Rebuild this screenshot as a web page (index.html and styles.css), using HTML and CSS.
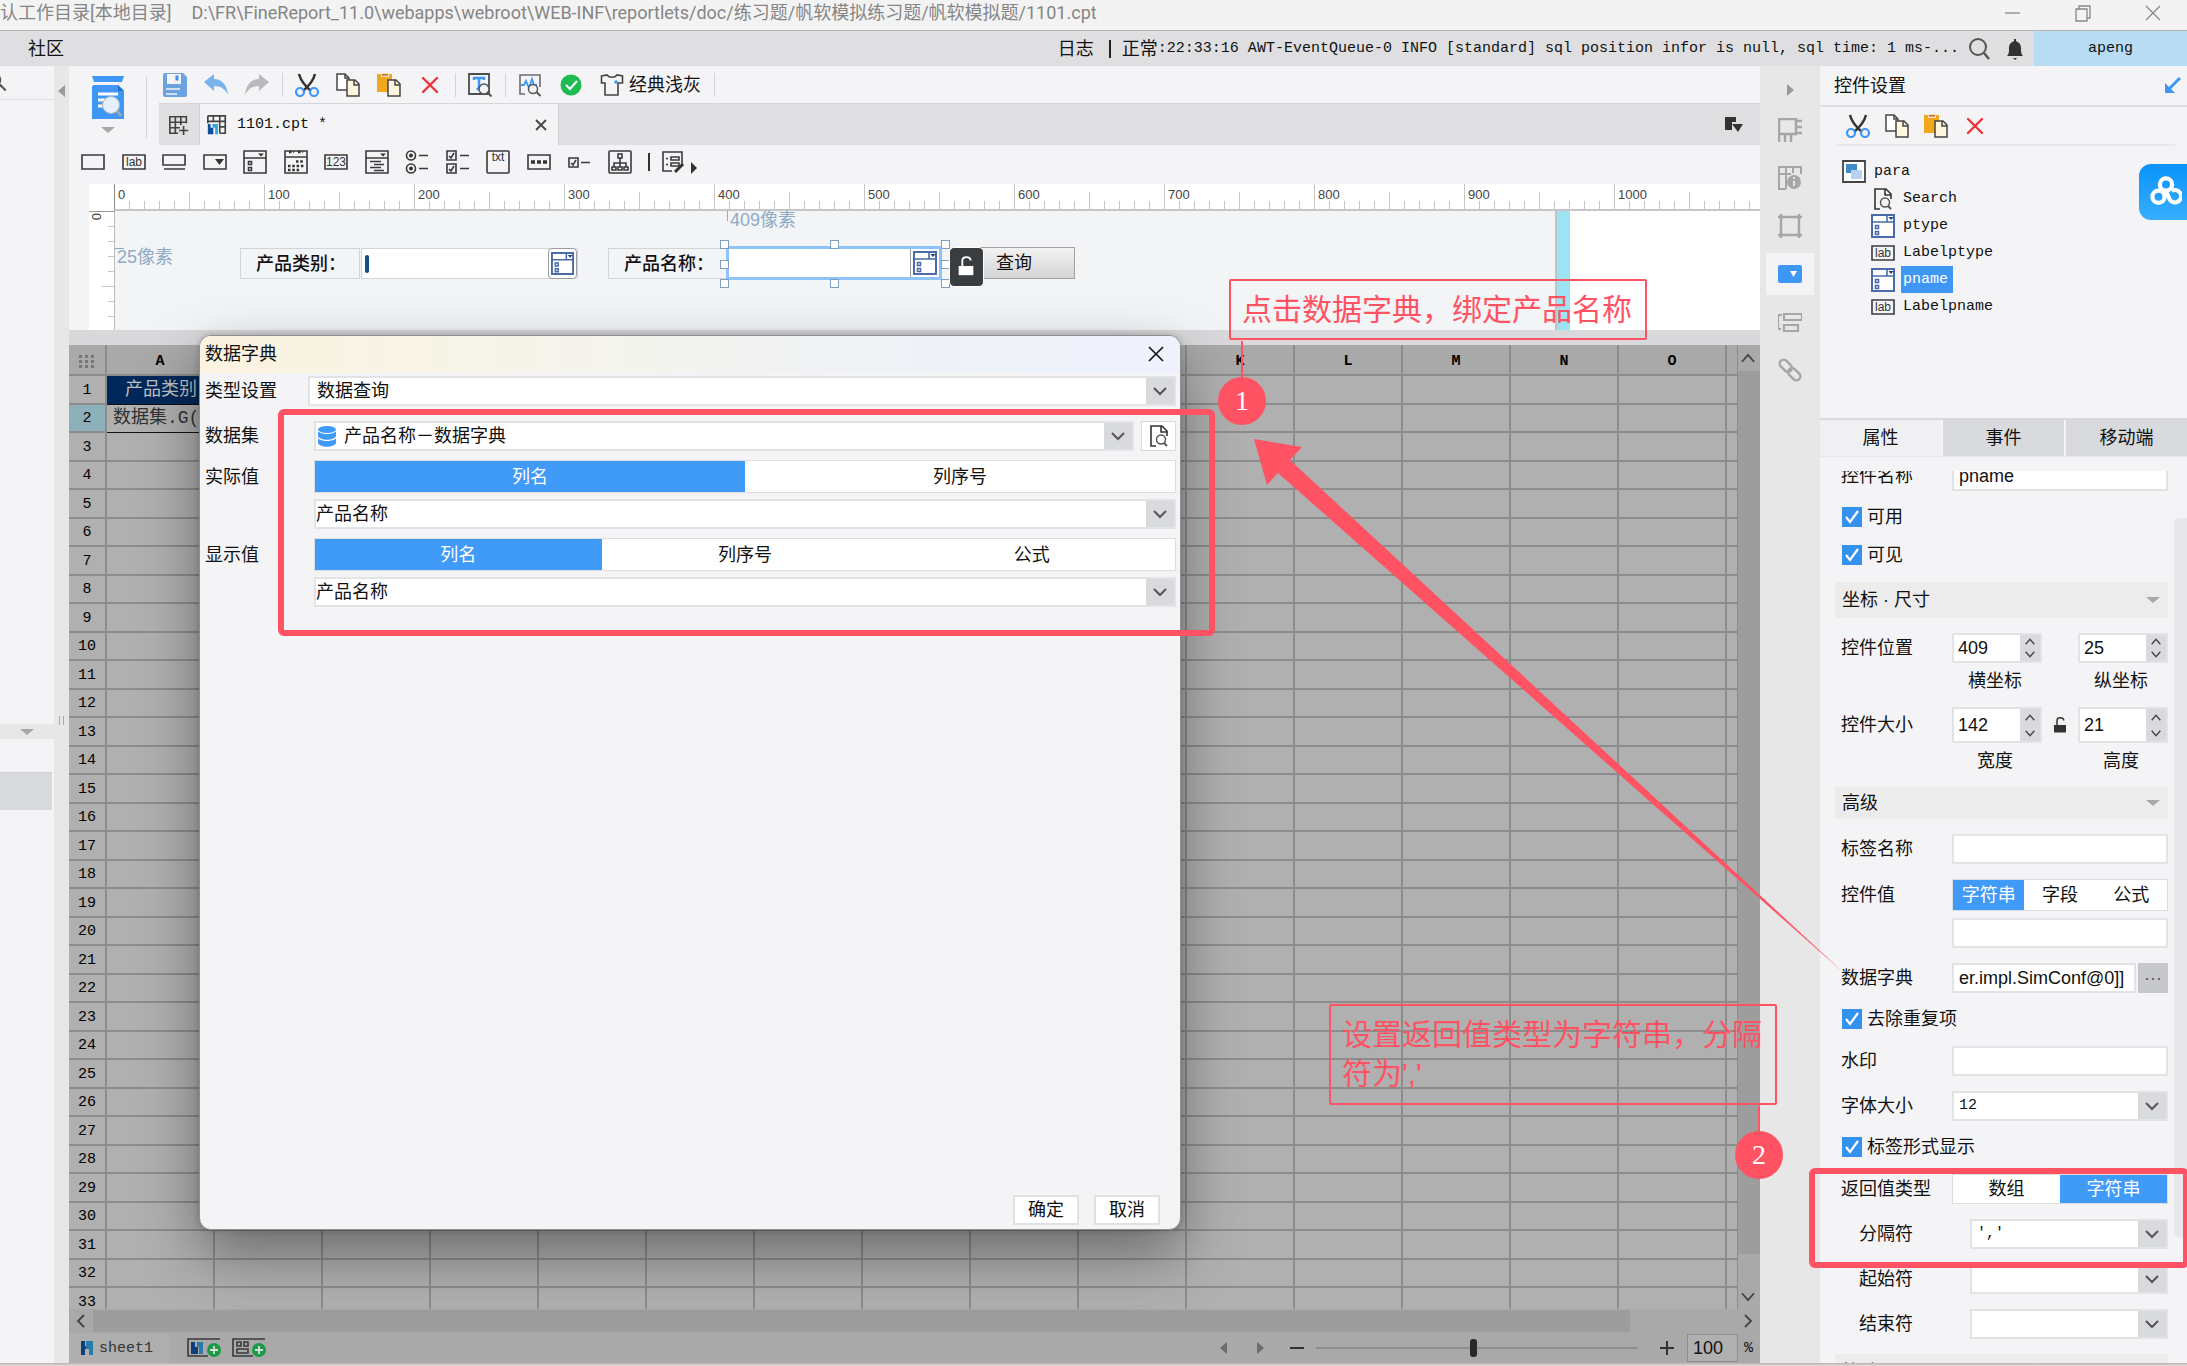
FILE: index.html
```html
<!DOCTYPE html>
<html lang="zh-CN">
<head>
<meta charset="utf-8">
<title>FineReport - 1101.cpt</title>
<link rel="stylesheet" href="styles.css">
</head>
<body>
<svg class="sprite" aria-hidden="true">
  <symbol id="i-save" viewBox="0 0 24 24"><path d="M0 2a2 2 0 0 1 2-2h18l4 4v18a2 2 0 0 1-2 2H2a2 2 0 0 1-2-2z" fill="#6ba2e0"/><path d="M4 1h14v10H4z" fill="#f4f4f6"/><path d="M12.500 2.500h3v5h-3z" fill="#3f8fe8"/><path d="M3 16h14M3 21h11" stroke="#f4f4f6" stroke-width="1.500"/></symbol>
  <symbol id="i-undo" viewBox="0 0 24 24"><path d="M0 9 10 1v5c8 0 13 6 14 16-3-6-7-9-14-9v5z" fill="#7ab2ee"/></symbol>
  <symbol id="i-redo" viewBox="0 0 24 24"><path d="M24 9 14 1v5C6 6 1 12 0 22c3-6 7-9 14-9v5z" fill="#b9babc"/></symbol>
  <symbol id="i-cut" viewBox="0 0 24 24"><path d="M4 1c1 4 5 11 12 17M20 1c-1 4-5 11-12 17" fill="none" stroke="#333" stroke-width="2.500"/><circle cx="5" cy="19" r="4" fill="none" stroke="#3f97f5" stroke-width="2.200"/><circle cx="19" cy="19" r="4" fill="none" stroke="#3f97f5" stroke-width="2.200"/></symbol>
  <symbol id="i-copy" viewBox="0 0 24 24"><path d="M1 1h8l4 4v12H1z" fill="#fff" stroke="#444" stroke-width="1.500"/><path d="M11 7h8l4 4v12H11z" fill="#fff6df" stroke="#444" stroke-width="1.500"/><path d="M18 7v5h5M9 1v4h4" fill="none" stroke="#444" stroke-width="1.500"/></symbol>
  <symbol id="i-paste" viewBox="0 0 24 24"><path d="M0 1h15v18H0z" fill="#f0a91c"/><path d="M4 0h8v4H4z" fill="#f4e3c0"/><path d="M5 1h6v1.500H5z" fill="#d0602a"/><path d="M11 7h8l4 4v12H11z" fill="#fff6df" stroke="#444" stroke-width="1.500"/><path d="M18 7v5h5" fill="none" stroke="#444" stroke-width="1.500"/></symbol>
  <symbol id="i-del" viewBox="0 0 24 24"><path d="m5 5 14 14M19 5 5 19" stroke="#ee3338" stroke-width="2.400" stroke-linecap="round"/></symbol>
  <symbol id="i-find" viewBox="0 0 24 24"><path d="M1 1h20v20H1z" fill="none" stroke="#4a4c50" stroke-width="1.800"/><path d="M6 7V5h10v2M11 5v11M8.500 16h5" fill="none" stroke="#3f97f5" stroke-width="2.500"/><circle cx="16" cy="16" r="5" fill="#f4f4f6" stroke="#555" stroke-width="1.500"/><path d="m19.500 19.500 4 4" stroke="#555" stroke-width="2"/></symbol>
  <symbol id="i-chart" viewBox="0 0 24 24"><path d="M7 21H2V2h20v12" fill="none" stroke="#6a6c70" stroke-width="1.600"/><path d="M3 12h3l2-4 3 7 3-9 2 6h3" fill="none" stroke="#3f97f5" stroke-width="1.800"/><circle cx="15" cy="16" r="4.500" fill="#f4f4f6" stroke="#555" stroke-width="1.500"/><path d="m18.500 19 4 4" stroke="#555" stroke-width="2"/></symbol>
  <symbol id="i-ok" viewBox="0 0 24 24"><circle cx="12" cy="12" r="10.500" fill="#1dbb50"/><path d="m7 12 4 4 7-8" fill="none" stroke="#fff" stroke-width="2.200"/></symbol>
  <symbol id="i-shirt" viewBox="0 0 24 24"><path d="M1.500 3 7 2c2 3 8 3 10 0l5.500 1v7H18v12H5V10H1.500z" fill="none" stroke="#444" stroke-width="1.600"/><circle cx="16" cy="9" r="1.800" fill="#3f97f5"/></symbol>
  <symbol id="i-newtab" viewBox="0 0 24 24"><path d="M20 10V3H2v18h9M2 9h18M2 15h11M8 3v18M14 3v9" fill="none" stroke="#444" stroke-width="1.800"/><path d="M17 13v10M12 18h10" stroke="#444" stroke-width="1.800"/></symbol>
  <symbol id="i-cpt" viewBox="0 0 24 24"><path d="M2 2h19v19h-6M2 2v8M2 8h19M15 14h6M8 2v6M15 2v19" fill="none" stroke="#444" stroke-width="1.800"/><path d="M2 11h3v4h3v7H2z" fill="#0d4f9c"/><path d="M7 11h6v11h-3v-7H7z" fill="#35a7e0"/></symbol>
  <symbol id="i-box" viewBox="0 0 24 24"><path d="M1 5h22v14H1z" class="ln"/></symbol>
  <symbol id="i-lab" viewBox="0 0 24 24"><path d="M1 5h22v14H1z" class="ln"/><text x="12" y="16" class="it">lab</text></symbol>
  <symbol id="i-btn" viewBox="0 0 24 24"><path d="M1 5h22v10H1zM2 19h21" class="ln"/></symbol>
  <symbol id="i-drop" viewBox="0 0 24 24"><path d="M1 5h22v14H1z" class="ln"/><path d="M12 9h9l-4.500 6z" fill="#333"/></symbol>
  <symbol id="i-combo" viewBox="0 0 24 24"><path d="M1 1h22v22H1zM1 8h22M5.500 11.500h3v3h-3zM5.500 17.500h3v3h-3z" class="ln"/><path d="M15 3.500h6l-3 3z" fill="#333"/></symbol>
  <symbol id="i-cal" viewBox="0 0 24 24"><path d="M1 1h22v22H1zM1 7h22" class="ln"/><path d="M5 2h5M14 2h5M12 11.500h8M4 16h16M4 20h12" stroke="#333" stroke-width="2.500" stroke-dasharray="2.500 1.800"/></symbol>
  <symbol id="i-num" viewBox="0 0 24 24"><path d="M1 5h22v14H1z" class="ln"/><text x="12" y="16" class="it">123</text></symbol>
  <symbol id="i-area" viewBox="0 0 24 24"><path d="M1 1h22v22H1zM1 8h22M5 11.500h11M9 14.500h10M5 17.500h11M9 20.500h10" class="ln"/><path d="M15 3.500h6l-3 3z" fill="#333"/></symbol>
  <symbol id="i-radio" viewBox="0 0 24 24"><g class="ln"><circle cx="6" cy="5.500" r="4.500"/><circle cx="6" cy="18.500" r="4.500"/><path d="M14 5.500h9M14 18.500h9"/></g><circle cx="6" cy="5.500" r="2" fill="#333"/><circle cx="6" cy="18.500" r="2" fill="#333"/></symbol>
  <symbol id="i-checks" viewBox="0 0 24 24"><path d="M1 1h9v9H1zM1 14h9v9H1zM14 5.500h9M14 18.500h9M3 6l2 2 3-5M3 19l2 2 3-5" class="ln"/></symbol>
  <symbol id="i-txt" viewBox="0 0 24 24"><rect x="1" y="1" width="22" height="22" rx="1" class="ln"/><text x="12" y="11" class="it">txt</text></symbol>
  <symbol id="i-pwd" viewBox="0 0 24 24"><path d="M1 5h22v14H1z" class="ln"/><path d="M4 12h4M10 12h4M16 12h4" stroke="#333" stroke-width="3.500"/></symbol>
  <symbol id="i-chk" viewBox="0 0 24 24"><path d="M2 8h9v9H2zM14 12.500h9M4 13l2 2 3-5" class="ln"/></symbol>
  <symbol id="i-tree" viewBox="0 0 24 24"><rect x="1" y="1" width="22" height="22" rx="1" class="ln"/><path d="M10 4h4v4h-4zM4 17h4v3H4zM10 17h4v3h-4zM16 17h4v3h-4zM12 8v9M6 17v-4h12v4" class="ln"/></symbol>
  <symbol id="i-form" viewBox="0 0 24 24"><path d="M11 21H2V2h19v12M10 7h8v3h-8zM10 13h8v3h-8zM5 8.500h2M5 14.500h2" class="ln"/><path d="m14 22 8-8" stroke="#333" stroke-width="3"/></symbol>
  <symbol id="i-combo-blue" viewBox="0 0 24 24"><path d="M1 1h22v22H1z" fill="#fff" stroke="#4b6ba8" stroke-width="2"/><path d="M1 8h22M16 1v7M4.500 11.500h3v3h-3zM4.500 17.500h3v3h-3z" fill="none" stroke="#4b6ba8" stroke-width="1.600"/><path d="M17.500 3h5L20 6z" fill="#233c7a"/></symbol>
  <symbol id="i-search-page" viewBox="0 0 24 24"><path d="M9 22H4V2h11l5 5v5M14 2v6h6" fill="none" stroke="#333" stroke-width="1.600"/><circle cx="14" cy="15.500" r="4.500" fill="none" stroke="#555" stroke-width="1.500"/><path d="m17 19 3 3" stroke="#555" stroke-width="2"/></symbol>
  <symbol id="i-mag" viewBox="0 0 24 24"><circle cx="11" cy="10" r="8" fill="none" stroke="#555" stroke-width="2"/><path d="m17 16 5 6" stroke="#555" stroke-width="2.500"/></symbol>
  <symbol id="i-unlock" viewBox="0 0 24 24"><path d="M4 12h16v10H4z" fill="currentColor"/><path d="M8 12V6c0-5 9-5 9 0" fill="none" stroke="currentColor" stroke-width="2"/></symbol>
  <symbol id="i-up" viewBox="0 0 24 24"><path d="m4 17 8-9 8 9" fill="none" stroke="#444" stroke-width="2.500"/></symbol>
  <symbol id="i-down" viewBox="0 0 24 24"><path d="m4 7 8 9 8-9" fill="none" stroke="#444" stroke-width="2.500"/></symbol>
  <symbol id="i-left" viewBox="0 0 24 24"><path d="m16 4-8 8 8 8" fill="none" stroke="#444" stroke-width="2.500"/></symbol>
  <symbol id="i-right" viewBox="0 0 24 24"><path d="m8 4 8 8-8 8" fill="none" stroke="#444" stroke-width="2.500"/></symbol>
</svg>

<div class="app">
  <header class="titlebar">
    <div class="titlebar__text"><span>认工作目录[本地目录]</span><span>D:\FR\FineReport_11.0\webapps\webroot\WEB-INF\reportlets/doc/练习题/帆软模拟练习题/帆软模拟题/1101.cpt</span></div>
    <div class="titlebar__buttons">
      <button aria-label="最小化"><svg viewBox="0 0 20 20"><path d="M2 10h15" stroke="#888" stroke-width="1.300"/></svg></button>
      <button aria-label="还原"><svg viewBox="0 0 20 20"><path d="M3 6h11v12H3zM6 6V3h11v12h-3" fill="none" stroke="#888" stroke-width="1.300"/></svg></button>
      <button aria-label="关闭"><svg viewBox="0 0 20 20"><path d="m3 3 14 14M17 3 3 17" stroke="#888" stroke-width="1.300"/></svg></button>
    </div>
  </header>

  <nav class="menubar">
    <a class="menubar__item" href="#">社区</a>
    <div class="log">日志 <i class="log__bar"></i> 正常<code>:22:33:16 AWT-EventQueue-0 INFO [standard] sql position infor is null, sql time: 1 ms-...</code></div>
    <svg class="icon"><use href="#i-mag"/></svg>
    <svg class="icon" viewBox="0 0 24 24"><path d="M4 19c2-2 2-4 2-8 0-9 12-9 12 0 0 4 0 6 2 8zM10 21h4l-2 2zM11 2h2v3h-2z" fill="#333"/></svg>
    <button class="user">apeng</button>
  </nav>

  <div class="workspace">
    <aside class="left">
      <div class="left__search"><svg viewBox="0 0 24 24"><circle cx="6" cy="8" r="8" fill="none" stroke="#555" stroke-width="2"/><path d="m13 14 8 8" stroke="#555" stroke-width="3"/></svg></div>
      <div class="left__pane"></div>
      <div class="left__bar"><i class="tri tri--down"></i></div>
      <div class="left__pane"><div class="left__sel"></div></div>
    </aside>
    <div class="gutter"><i class="tri tri--left"></i><i class="grip"></i><i></i></div>

    <main class="editor">
      <div class="tools">
        <div class="preview">
          <svg viewBox="0 0 32 43"><path d="M0 0h32l-2 6H2zM0 11a2 2 0 0 1 2-2h24l6 6v28H0z" fill="#3f97f5"/><path d="m26 9 6 6h-6z" fill="#1b6fd0"/><path d="M6 18h20M6 24h9M6 30h7" stroke="#fff" stroke-width="3"/><circle cx="19" cy="29" r="8.500" fill="#e6f0fa" stroke="#a9b8c8"/><path d="m25 35 4 5" stroke="#9aa7b5" stroke-width="3"/></svg>
          <i class="tri tri--down"></i>
        </div>
        <div class="tools__main">
          <div class="toolbar">
            <svg class="icon"><use href="#i-save"/></svg><svg class="icon"><use href="#i-undo"/></svg><svg class="icon"><use href="#i-redo"/></svg>
            <i class="sep"></i>
            <svg class="icon"><use href="#i-cut"/></svg><svg class="icon"><use href="#i-copy"/></svg><svg class="icon"><use href="#i-paste"/></svg><svg class="icon"><use href="#i-del"/></svg>
            <i class="sep"></i>
            <svg class="icon"><use href="#i-find"/></svg>
            <i class="sep"></i>
            <svg class="icon"><use href="#i-chart"/></svg><svg class="icon"><use href="#i-ok"/></svg>
            <button class="theme"><svg class="icon"><use href="#i-shirt"/></svg>经典浅灰</button>
            <i class="sep"></i>
          </div>
          <div class="tabs">
            <button class="tabs__new" aria-label="新建"><svg class="icon"><use href="#i-newtab"/></svg></button>
            <div class="tabs__tab"><svg class="icon"><use href="#i-cpt"/></svg><span>1101.cpt *</span><button aria-label="关闭"><svg viewBox="0 0 14 14"><path d="m2 2 10 10M12 2 2 12" stroke="#444" stroke-width="1.800"/></svg></button></div>
            <svg class="tabs__menu" viewBox="0 0 20 18"><path d="M1 1h11v5H8v8H1z" fill="#333"/><path d="M8 8h11l-5 8z" fill="#333"/></svg>
          </div>
        </div>
      </div>
      <div class="widgets">
        <svg class="icon"><use href="#i-box"/></svg><svg class="icon"><use href="#i-lab"/></svg><svg class="icon"><use href="#i-btn"/></svg><svg class="icon"><use href="#i-drop"/></svg><svg class="icon"><use href="#i-combo"/></svg><svg class="icon"><use href="#i-cal"/></svg><svg class="icon"><use href="#i-num"/></svg><svg class="icon"><use href="#i-area"/></svg><svg class="icon"><use href="#i-radio"/></svg><svg class="icon"><use href="#i-checks"/></svg><svg class="icon"><use href="#i-txt"/></svg><svg class="icon"><use href="#i-pwd"/></svg><svg class="icon"><use href="#i-chk"/></svg><svg class="icon"><use href="#i-tree"/></svg>
        <i class="widgets__bar"></i><svg class="icon"><use href="#i-form"/></svg><i class="widgets__more"></i>
      </div>

      <div class="designer">
        <div class="ruler"><span>0</span><span>100</span><span>200</span><span>300</span><span>400</span><span>500</span><span>600</span><span>700</span><span>800</span><span>900</span><span>1000</span></div>
        <div class="designer__body">
          <div class="vruler"><span>0</span></div>
          <div class="canvas">
            <span class="dim dim--y">25像素</span>
            <span class="dim dim--x">409像素</span>
            <div class="wlabel wlabel--type">产品类别：</div>
            <div class="wcombo wcombo--type"><i class="caret"></i><svg class="icon"><use href="#i-combo-blue"/></svg></div>
            <div class="wlabel wlabel--name">产品名称：</div>
            <div class="wcombo wcombo--name"><svg class="icon"><use href="#i-combo-blue"/></svg></div>
            <i class="handle h-l h-t"></i><i class="handle h-c h-t"></i><i class="handle h-r h-t"></i>
            <i class="handle h-l h-m"></i><i class="handle h-r h-m"></i>
            <i class="handle h-l h-b"></i><i class="handle h-c h-b"></i><i class="handle h-r h-b"></i>
            <button class="wquery">查询</button>
            <div class="wlock"><svg class="icon"><use href="#i-unlock"/></svg></div>
          </div>
          <div class="canvas-edge"></div>
        </div>
      </div>

      <div class="splitter"></div>

      <section class="sheet">
        <div class="sheet__view">
          <div class="sheet__clip">
            <table class="grid">
              <colgroup><col class="grid__rowcol"><col span="15" class="grid__col"><col class="grid__last"></colgroup>
              <thead><tr><th><i class="dots"></i></th><th>A</th><th>B</th><th>C</th><th>D</th><th>E</th><th>F</th><th>G</th><th>H</th><th>I</th><th>J</th><th>K</th><th>L</th><th>M</th><th>N</th><th>O</th><th></th></tr></thead>
              <tbody id="rows"></tbody>
            </table>
          </div>
          <div class="vscroll"><svg class="arrow"><use href="#i-up"/></svg><i class="vscroll__thumb"></i><svg class="arrow"><use href="#i-down"/></svg></div>
        </div>
        <div class="hscroll"><svg class="arrow"><use href="#i-left"/></svg><i class="hscroll__thumb"></i><svg class="arrow"><use href="#i-right"/></svg></div>
        <footer class="sheetbar">
          <button class="sheetbar__tab"><svg viewBox="0 0 12 14"><path d="M0 0h4v5h4v3H4v6H0z" fill="#0d3f7c"/><path d="M5 0h7v14H8V8H5z" fill="#2a7ba8"/></svg>sheet1</button>
          <svg class="sheetbar__add" viewBox="0 0 34 20"><path d="M33 1H1v17h20" class="ln"/><path d="M4 4h4v5h3v7H4z" fill="#0d3f7c"/><path d="M10 4h6v12h-4V9h-2z" fill="#2a7ba8"/><circle cx="27" cy="12" r="7" fill="#1d9a48"/><path d="M27 8v8M23 12h8" stroke="#ddd" stroke-width="1.800"/></svg>
          <svg class="sheetbar__add" viewBox="0 0 34 20"><path d="M33 1H1v17h20M5 4h4v4H5zM12 4h4v4h-4zM5 11h11v4H5z" class="ln"/><circle cx="27" cy="12" r="7" fill="#1d9a48"/><path d="M27 8v8M23 12h8" stroke="#ddd" stroke-width="1.800"/></svg>
          <div class="zoom"><i class="tri tri--left"></i><i class="tri tri--right"></i><span class="minus"></span><input type="range" min="0" max="100" value="49" aria-label="缩放"><span class="plus"></span><input class="zoom__value" type="text" value="100" aria-label="缩放比例"><span class="zoom__pct">%</span></div>
        </footer>
      </section>
    </main>

    <nav class="rail">
      <span><i class="tri tri--right"></i></span>
      <span><svg class="icon" viewBox="0 0 24 24"><path d="M1 1h17v15H1zM1 16v8M7 16v8M13 16v8M18 3h6M18 9h6M18 15h6" fill="none" stroke="#a5a6a8" stroke-width="2.500"/></svg></span>
      <span><svg class="icon" viewBox="0 0 24 24"><path d="M23 8V1H1v22h7M1 8h12M8 1v22M15 1v6" fill="none" stroke="#a5a6a8" stroke-width="2"/><circle cx="16" cy="16" r="7" fill="#a5a6a8"/><path d="M16 11v2M16 15v5" stroke="#e7e7e8" stroke-width="2"/></svg></span>
      <span><svg class="icon" viewBox="0 0 24 24"><path d="M0 3h24M0 21h24M3 0v24M21 0v24" fill="none" stroke="#a5a6a8" stroke-width="2.500"/></svg></span>
      <span class="rail__on"><svg class="icon" viewBox="0 0 24 24"><rect y="3" width="24" height="18" rx="2" fill="#3f97f5"/><path d="M12 9h7l-3.500 6z" fill="#fff"/></svg></span>
      <span><svg class="icon" viewBox="0 0 24 24"><path d="M4 5H0v14h3M6 4h18v6H6zM6 15h14v6H6z" fill="none" stroke="#a5a6a8" stroke-width="2.200"/></svg></span>
      <span><svg class="icon" viewBox="0 0 24 24"><g transform="rotate(45 12 12)" fill="none" stroke="#a5a6a8" stroke-width="2.500"><rect x="-1" y="8" width="14" height="8" rx="4"/><rect x="11" y="8" width="14" height="8" rx="4"/></g></svg></span>
    </nav>

    <aside class="props">
      <div class="props__title">控件设置<svg viewBox="0 0 18 18"><path d="M17 1 6 12" stroke="#3f97f5" stroke-width="3"/><path d="M2 6v10h10z" fill="#3f97f5"/></svg></div>
      <div class="props__tools"><svg class="icon"><use href="#i-cut"/></svg><svg class="icon"><use href="#i-copy"/></svg><svg class="icon"><use href="#i-paste"/></svg><svg class="icon"><use href="#i-del"/></svg></div>
      <ul class="tree">
        <li class="tree__root"><svg class="icon" viewBox="0 0 24 24"><path d="M1 1h22v21H1z" fill="#fff" stroke="#444" stroke-width="1.800"/><path d="M4 4h11v9H4z" fill="#3d8dc8"/><path d="M9 10h11v9H9z" fill="#b9d0f2"/></svg><span>para</span></li>
        <li><svg class="icon"><use href="#i-search-page"/></svg><span>Search</span></li>
        <li><svg class="icon"><use href="#i-combo-blue"/></svg><span>ptype</span></li>
        <li><svg class="icon"><use href="#i-lab"/></svg><span>Labelptype</span></li>
        <li><svg class="icon"><use href="#i-combo-blue"/></svg><span class="tree__on">pname</span></li>
        <li><svg class="icon"><use href="#i-lab"/></svg><span>Labelpname</span></li>
      </ul>
      <div class="ptabs"><button class="ptabs__on">属性</button><button>事件</button><button>移动端</button></div>
      <form class="form">
        <div class="row row--first"><label for="f-name">控件名称</label><input id="f-name" type="text" value="pname"></div>
        <label class="check"><input type="checkbox" checked>可用</label>
        <label class="check"><input type="checkbox" checked>可见</label>
        <h3 class="section">坐标 · 尺寸<i class="tri tri--down"></i></h3>
        <div class="row"><span class="row__label">控件位置</span>
          <div class="spin"><input type="text" value="409" aria-label="横坐标"><span class="spin__btns"><svg><use href="#i-up"/></svg><svg><use href="#i-down"/></svg></span></div>
          <span class="row__mid"></span>
          <div class="spin"><input type="text" value="25" aria-label="纵坐标"><span class="spin__btns"><svg><use href="#i-up"/></svg><svg><use href="#i-down"/></svg></span></div>
        </div>
        <div class="captions"><span>横坐标</span><span>纵坐标</span></div>
        <div class="row row--size"><span class="row__label">控件大小</span>
          <div class="spin"><input type="text" value="142" aria-label="宽度"><span class="spin__btns"><svg><use href="#i-up"/></svg><svg><use href="#i-down"/></svg></span></div>
          <span class="row__mid"><svg><use href="#i-unlock"/></svg></span>
          <div class="spin"><input type="text" value="21" aria-label="高度"><span class="spin__btns"><svg><use href="#i-up"/></svg><svg><use href="#i-down"/></svg></span></div>
        </div>
        <div class="captions"><span>宽度</span><span>高度</span></div>
        <h3 class="section section--short">高级<i class="tri tri--down"></i></h3>
        <div class="row"><label for="f-label">标签名称</label><input id="f-label" type="text"></div>
        <div class="row row--seg"><span class="row__label">控件值</span><div class="seg"><button type="button" class="seg__on">字符串</button><button type="button">字段</button><button type="button">公式</button></div></div>
        <div class="row row--tight"><span class="row__label"></span><input type="text" aria-label="控件值"></div>
        <div class="row"><label for="f-dict">数据字典</label><input id="f-dict" class="dict" type="text" value="er.impl.SimConf@0]]"><button type="button" class="more">···</button></div>
        <label class="check"><input type="checkbox" checked>去除重复项</label>
        <div class="row"><label for="f-wm">水印</label><input id="f-wm" type="text"></div>
        <div class="row"><label for="f-size">字体大小</label><select id="f-size" class="mono"><option>12</option></select></div>
        <label class="check"><input type="checkbox" checked>标签形式显示</label>
        <div class="row"><span class="row__label">返回值类型</span><div class="seg"><button type="button">数组</button><button type="button" class="seg__on">字符串</button></div></div>
        <div class="row row--sub"><label for="f-sep">分隔符</label><select id="f-sep" class="mono"><option>','</option></select></div>
        <div class="row row--sub"><label for="f-start">起始符</label><select id="f-start"><option></option></select></div>
        <div class="row row--sub"><label for="f-end">结束符</label><select id="f-end"><option></option></select></div>
        <h3 class="section">校验</h3>
      </form>
    </aside>
  </div>
  <div class="taskline"></div>

  <i class="props-scroll"></i>
  <button class="cloud" aria-label="云盘"><svg viewBox="0 0 34 36"><g fill="none" stroke="#fff" stroke-width="4.500"><circle cx="17" cy="10" r="6.500"/><circle cx="9" cy="23" r="6.500"/><path d="M17 17l4 9a6.500 6.500 0 1 0 2-9"/></g></svg></button>

  <div class="dialog" role="dialog" aria-label="数据字典">
    <div class="dialog__title">数据字典<button aria-label="关闭"><svg viewBox="0 0 16 16"><path d="m1 1 14 14M15 1 1 15" stroke="#111" stroke-width="1.600"/></svg></button></div>
    <div class="dialog__body">
      <div class="drow drow--type"><label for="d-type">类型设置</label><select id="d-type"><option>数据查询</option></select></div>
      <div class="drow"><label for="d-set">数据集</label><select id="d-set" class="with-db"><option>产品名称－数据字典</option></select><button class="dview" aria-label="预览"><svg class="icon"><use href="#i-search-page"/></svg></button></div>
      <div class="drow drow--seg"><span class="drow__label">实际值</span><div class="seg"><button class="seg__on">列名</button><button>列序号</button></div></div>
      <div class="drow drow--tight"><span class="drow__label"></span><select class="flush" aria-label="实际值"><option>产品名称</option></select></div>
      <div class="drow drow--seg"><span class="drow__label">显示值</span><div class="seg"><button class="seg__on">列名</button><button>列序号</button><button>公式</button></div></div>
      <div class="drow drow--tight"><span class="drow__label"></span><select class="flush" aria-label="显示值"><option>产品名称</option></select></div>
    </div>
    <div class="dialog__foot"><button>确定</button><button>取消</button></div>
  </div>

  <div class="mark mark--dialog"></div>
  <div class="mark mark--return"></div>
  <svg class="pointer" viewBox="0 0 600 546"><path d="M6 6 54 14 42 27 596 540 30 40 19 52z" fill="#ff5364"/></svg>
  <div class="note note--one">点击数据字典，绑定产品名称</div>
  <div class="note note--two">设置返回值类型为字符串，分隔符为','</div>
  <div class="badge badge--one">1</div>
  <div class="badge badge--two">2</div>
</div>
<script src="grid.js"></script>
</body>
</html>
```
FILE: grid.js
```js
// Fills the worksheet with its 33 rows of 15 columns.
const body = document.getElementById('rows');
for (let r = 1; r <= 33; r++) {
  const tr = body.insertRow();
  const head = document.createElement('th');
  head.scope = 'row';
  head.textContent = r;
  tr.appendChild(head);
  for (let c = 0; c < 16; c++) tr.insertCell();
}
body.rows[0].cells[1].textContent = '产品类别';
body.rows[0].cells[1].className = 'cell-head';
body.rows[1].cells[0].className = 'row-on';
body.rows[1].cells[1].textContent = '数据集.G(类别)';
body.rows[1].cells[1].className = 'cell-data';
```
FILE: styles.css
```css
* { box-sizing: border-box; }
body {
  margin: 0;
  color: #111;
  font: 18px/24px "Liberation Sans", "Noto Sans CJK SC", sans-serif;
}
button, input, select {
  margin: 0;
  padding: 0;
  border: 0;
  border-radius: 0;
  background: none;
  color: inherit;
  font: inherit;
}
svg { display: block; flex: none; }
i { display: block; flex: none; }
.sprite { display: none; }
.icon { width: 24px; height: 24px; }
.ln { fill: none; stroke: #3a3a3c; stroke-width: 1.6; }
.it { font: 12px "Liberation Sans", sans-serif; fill: #333; text-anchor: middle; }

.app {
  position: relative;
  display: flex;
  flex-direction: column;
  height: 100vh;
  overflow: hidden;
  background: #f4f4f6;
}
.tri { width: 0; height: 0; border: 5px solid transparent; }
.tri--down { border-top: 6px solid #a8a8aa; border-bottom: 0; border-left-width: 7px; border-right-width: 7px; }
.tri--left { border-right: 7px solid #9a9a9c; border-left: 0; border-top-width: 6px; border-bottom-width: 6px; }
.tri--right { border-left: 7px solid #9a9a9c; border-right: 0; border-top-width: 6px; border-bottom-width: 6px; }

/* window title */
.titlebar {
  display: flex;
  justify-content: space-between;
  align-items: center;
  height: 31px;
  padding-bottom: 4px;
  background: #f3f3f3;
  border-bottom: 1px solid #b4b4b4;
  color: #858585;
  font-family: Roboto, "Noto Sans CJK SC", sans-serif;
}
.titlebar__text { display: flex; gap: 20px; white-space: nowrap; }
.titlebar__buttons { display: flex; gap: 50px; padding-right: 24px; }
.titlebar__buttons svg { width: 20px; height: 20px; }

/* menu bar */
.menubar {
  display: flex;
  align-items: center;
  height: 35px;
  gap: 12px;
  background: #dfdfe1;
}
.menubar__item { padding-left: 28px; margin-right: auto; color: inherit; text-decoration: none; }
.log { display: flex; align-items: center; margin-right: -4px; white-space: pre; }
.log__bar { width: 2px; height: 18px; margin: 0 6px 0 10px; background: #222; }
.log code, .mono { font: 15px/24px "Liberation Mono", "Noto Sans CJK SC", monospace; }
.user {
  width: 153px;
  height: 35px;
  margin-left: -5px;
  background: #b8dcf3;
  font: 15px "Liberation Mono", monospace;
}

.workspace { display: flex; flex: 1; min-height: 0; }
.taskline { height: 3px; background: linear-gradient(#bdb0ab, #e8dcd8); }

/* left dock */
.left { display: flex; flex-direction: column; width: 54px; }
.left__search { height: 34px; padding-top: 8px; border-bottom: 1px solid #dcdcde; }
.left__search svg { width: 18px; height: 18px; margin-left: -10px; }
.left__pane { flex: 1; overflow: hidden; }
.left__bar { display: flex; align-items: center; justify-content: center; height: 15px; background: #e7e7e8; }
.left__sel { height: 38px; margin: 33px 2px 0 0; background: #d8dade; border-top: 1px solid #cfd0d3; }
.gutter {
  display: flex;
  flex-direction: column;
  justify-content: space-between;
  align-items: center;
  width: 15px;
  padding: 19px 0;
  background: #e7e7e8;
}
.grip { width: 5px; height: 9px; border: solid #a8a8aa; border-width: 0 1px; }

/* editor column */
.editor { display: flex; flex-direction: column; flex: 1; min-width: 0; }
.tools { display: flex; height: 79px; }
.preview {
  display: flex;
  flex-direction: column;
  align-items: center;
  gap: 8px;
  width: 78px;
  height: 62px;
  margin-top: 10px;
  border-right: 1px solid #d4d4d6;
}
.preview svg { width: 32px; height: 43px; }
.tools__main { display: flex; flex-direction: column; flex: 1; padding-left: 12px; }
.toolbar { display: flex; align-items: center; gap: 17px; height: 37px; padding-left: 4px; }
.sep { width: 1px; height: 24px; margin: 0 -5px 0 -4px; background: #d4d4d6; }
.theme { display: flex; align-items: center; gap: 5px; }
.tabs { display: flex; align-items: center; height: 42px; background: #dfdfe1; border-top: 1px solid #d6d6d8; }
.tabs__new { display: flex; align-items: center; justify-content: center; width: 40px; height: 41px; }
.tabs__new .icon, .tabs__tab .icon { width: 22px; height: 22px; }
.tabs__tab {
  display: flex;
  align-items: center;
  width: 360px;
  height: 41px;
  padding: 0 10px 0 6px;
  gap: 9px;
  background: #f4f4f6;
  border: solid #cfcfd1;
  border-width: 0 1px;
  font: 15px/24px "Liberation Mono", monospace;
}
.tabs__tab button { margin-left: auto; }
.tabs__tab button svg { width: 14px; height: 14px; }
.tabs__menu { width: 20px; height: 18px; margin: 0 16px 0 auto; }
.widgets { display: flex; align-items: center; gap: 17px; height: 39px; padding: 0 0 5px 12px; }
.widgets .icon { margin-right: -1px; }
.widgets .icon:nth-child(odd) { margin-right: 0; }
.widgets__bar { width: 2px; height: 18px; margin-right: -6px; background: #333; }
.widgets__more { border: 6px solid transparent; border-left: 6px solid #333; border-right: 0; margin: 12px 0 0 -10px; }

/* parameter pane designer */
.designer { height: 146px; background: linear-gradient(90deg, #f4f4f6 20px, #fff 20px); }
.ruler {
  display: flex;
  height: 27px;
  margin-left: 45px;
  overflow: hidden;
  border-left: 1px solid #888;
  border-bottom: 2px solid #c6c6c8;
  background:
    repeating-linear-gradient(90deg, transparent 0 149px, #c6c6c8 149px 150px) 0 0 / 100% 100% no-repeat,
    repeating-linear-gradient(90deg, transparent 0 74px, #c6c6c8 74px 75px) 0 100% / 100% 17px no-repeat,
    repeating-linear-gradient(90deg, transparent 0 14px, #c6c6c8 14px 15px) 0 100% / 100% 8px no-repeat,
    #fff;
}
.ruler span { flex: 0 0 150px; padding-left: 3px; font-size: 13px; line-height: 21px; color: #444; }
.designer__body { display: flex; height: 119px; margin-left: 20px; }
.vruler {
  width: 26px;
  border-top: 1px solid #999;
  border-right: 1px solid #bbb;
  background:
    repeating-linear-gradient(#0000 0 74px, #c6c6c8 74px 75px) 100% 0 / 12px 100% no-repeat,
    repeating-linear-gradient(#0000 0 14px, #c6c6c8 14px 15px) 100% 0 / 6px 100% no-repeat,
    #fff;
}
.vruler span { display: block; width: 12px; margin-top: 1px; font-size: 13px; line-height: 10px; text-align: center; color: #444; writing-mode: vertical-rl; }
.canvas { position: relative; flex: 0 0 1440px; background: #f3f4f6; }
.canvas-edge { width: 15px; background: #9ce3f3; border-left: 2px solid #c0c4c6; }
.dim { position: absolute; color: #8faac6; line-height: 20px; }
.dim--y { left: 0; top: 36px; padding: 0 2px; }
.dim--y::before { content: ""; position: absolute; left: 0; top: 1px; width: 9px; height: 1px; background: #8faac6; }
.dim--x { left: 612px; top: -1px; padding-left: 3px; }
.dim--x::before { content: ""; position: absolute; left: 0; top: 1px; width: 1px; height: 10px; background: #8faac6; }
.wlabel { position: absolute; top: 37px; width: 120px; height: 31px; padding-left: 15px; border: 1px solid #d3d4d6; line-height: 30px; white-space: nowrap; overflow: hidden; font-weight: 500; }
.wlabel--type { left: 125px; }
.wlabel--name { left: 493px; }
.wcombo { position: absolute; display: flex; align-items: center; height: 31px; background: #fff; border: 1px solid #d3d4d6; }
.wcombo .icon { width: 29px; height: 31px; margin-left: auto; padding: 3px 2px; border: 1px solid #9a9ca0; border-radius: 4px; background: #fff; }
.wcombo--type { left: 246px; top: 37px; width: 217px; }
.caret { width: 4px; height: 18px; margin-left: 3px; border-radius: 2px; background: #0d4f90; }
.wcombo--name { left: 611px; top: 35px; width: 216px; height: 34px; border: 3px solid #8fc3fb; }
.wcombo--name .icon { height: 28px; padding: 2px; border-radius: 0; border-width: 0 0 0 1px; }
.handle { position: absolute; width: 9px; height: 9px; border: 1px solid #7f9fbf; background: #fff; }
.h-l { left: 605px; } .h-c { left: 715px; } .h-r { left: 826px; }
.h-t { top: 29px; } .h-m { top: 49px; } .h-b { top: 68px; }
.wquery { position: absolute; left: 860px; top: 36px; width: 100px; height: 32px; padding-left: 20px; text-align: left; line-height: 28px; border: 1px solid #a2a2a4; background: linear-gradient(#f3f3f3, #d4d4d6); }
.wlock { position: absolute; left: 834px; top: 36px; width: 35px; height: 40px; padding: 7px 5px; border: 1px solid #fff; border-radius: 5px; background: #3a3d40; color: #fff; }
.wlock .icon { width: 22px; height: 22px; }
.splitter { height: 15px; background: #d9d9db; }

/* worksheet */
.sheet { display: flex; flex-direction: column; flex: 1; min-height: 0; background: #a9a9a9; }
.sheet__view { display: flex; flex: 1; min-height: 0; }
.sheet__clip { flex: 1; min-width: 0; overflow: hidden; background: #b0b0b0; }
.grid { width: 1669px; table-layout: fixed; border-collapse: collapse; font: 15px/24px "Liberation Mono", "Noto Sans CJK SC", monospace; color: #000; }
.grid__rowcol { width: 37px; }
.grid__col { width: 108px; }
.grid__last { width: 12px; }
.grid tr { height: 29px; }
.grid thead tr { height: 30px; }
.grid tbody tr:nth-child(even) { height: 28px; }
.grid th, .grid td { padding: 0; border: 2px solid #8c8c8c; border-top-width: 0; font-weight: 400; overflow: hidden; white-space: nowrap; }
.grid th:first-child { border-left: 0; }
.grid tbody th { padding-top: 2px; }
.grid thead th { padding-top: 4px; font-weight: 700; background: #a9a9a9; }
.grid td:nth-child(10) { border-right: 2px dashed #222; }
.grid .cell-head { padding-left: 18px; background: #00285a; color: #c0c0c0; font-size: 18px; line-height: 20px; border: 1px solid #111; }
.grid .cell-data { padding-left: 6px; color: #333; font-size: 18px; line-height: 20px; border: 1px solid #111; }
.grid .row-on { background: #8eb0bb; }
.dots { width: 16px; height: 14px; margin: 0 auto; background: repeating-linear-gradient(90deg, #0000 0 3px, #a9a9a9 3px 6px), repeating-linear-gradient(#777 0 3px, #a9a9a9 3px 5px); }
.arrow { width: 18px; height: 18px; }
.vscroll { display: flex; flex-direction: column; width: 22px; padding: 4px 0 3px; }
.vscroll .arrow { margin: 0 1px; }
.vscroll__thumb { flex: 1; margin: 4px 0 34px; background: #9d9d9d; }
.hscroll { display: flex; height: 24px; padding: 1px 0; }
.hscroll .arrow { margin: 2px 3px; }
.hscroll__thumb { flex: 1; margin-right: 106px; background: #9d9d9d; }
.sheetbar { display: flex; align-items: center; height: 30px; }
.sheetbar__tab { display: flex; align-items: center; gap: 6px; width: 101px; height: 30px; margin-right: 17px; padding-left: 12px; background: #aeaeae; color: #333; font: 15px "Liberation Mono", monospace; }
.sheetbar__tab svg { width: 12px; height: 14px; }
.sheetbar__add { width: 34px; height: 20px; margin-right: 11px; }
.zoom { display: flex; align-items: center; margin-left: auto; }
.zoom .tri { margin-right: 30px; }
.zoom .tri--left { border-right-color: #6c6c6c; }
.zoom .tri--right { margin-right: 26px; border-left-color: #6c6c6c; }
.minus { width: 14px; height: 2px; margin-right: 12px; background: #333; }
.zoom input[type="range"] { width: 322px; height: 20px; appearance: none; background: linear-gradient(#8e8e8e, #8e8e8e) 0 9px / 100% 2px no-repeat; }
.zoom input[type="range"]::-webkit-slider-thumb { appearance: none; width: 7px; height: 18px; border-radius: 3px; background: #2a2a2a; }
.plus { width: 14px; height: 14px; margin: 0 13px 0 22px; background: linear-gradient(#333, #333) 6px 0 / 2px 14px no-repeat, linear-gradient(#333, #333) 0 6px / 14px 2px no-repeat; }
.zoom__value { width: 51px; height: 28px; padding-left: 5px; border: 1px solid #8e8e8e; background: #b0b0b0; }
.zoom__pct { width: 22px; padding-left: 6px; font: 15px "Liberation Mono", monospace; }

/* icon rail */
.rail { display: flex; flex-direction: column; align-items: center; width: 60px; padding: 11px 0; background: #e7e7e8; gap: 6px; }
.rail span { display: flex; align-items: center; justify-content: center; width: 48px; height: 42px; }
.rail span:first-child { height: 26px; }
.rail__on { background: #f4f4f6; }

/* widget settings */
.props { display: flex; flex-direction: column; width: 367px; }
.props__title { display: flex; align-items: center; justify-content: space-between; height: 41px; padding: 0 6px 0 14px; border-bottom: 2px solid #dedee0; }
.props__title svg { width: 18px; height: 18px; }
.props__tools { display: flex; align-items: center; gap: 15px; height: 39px; margin: 0 12px 0 16px; padding-left: 10px; border-bottom: 2px solid #e8e8ea; }
.tree { height: 272px; margin: 0; padding: 12px 0 0 51px; list-style: none; font: 15px/27px "Liberation Mono", monospace; }
.tree li { display: flex; align-items: center; height: 27px; gap: 6px; }
.tree li span { padding: 0 2px; }
.tree__root { margin-left: -29px; }
.tree .tree__on { padding-right: 5px; background: #3f97f5; color: #fff; }
.ptabs { display: flex; gap: 2px; height: 39px; border-top: 2px solid #d8dade; border-bottom: 1px solid #e8e8ea; }
.ptabs button { flex: 1; background: #d8dade; }
.ptabs .ptabs__on { background: #f0f0f2; }
.form { display: flex; flex-direction: column; flex: 1; min-height: 0; margin-top: 14px; padding: 0 19px 0 15px; overflow: hidden; }
.form > * { flex: none; }
.row { display: flex; height: 30px; margin-top: 15px; }
.row--first { margin-top: -10px; }
.row > label, .row__label { flex: 0 0 117px; align-self: center; padding-left: 6px; }
.row > input, .row > select { flex: 1; min-width: 0; border: 2px solid #e2e3e5; background-color: #fff; padding: 0 5px; }
.row--size { height: 36px; margin-top: 0; }
.row--seg { height: 32px; }
.row--tight { margin-top: 7px; }
.row--sub > label { flex-basis: 135px; padding-left: 24px; }
.check { display: flex; align-items: center; gap: 5px; height: 20px; margin: 16px 0 2px 7px; }
.check input { width: 20px; height: 20px; appearance: none; background: #3491ee url("data:image/svg+xml,%3Csvg xmlns='http://www.w3.org/2000/svg' viewBox='0 0 20 20'%3E%3Cpath d='m4 10 4 5 8-11' fill='none' stroke='white' stroke-width='2.200'/%3E%3C/svg%3E"); }
.section { display: flex; align-items: center; justify-content: space-between; height: 36px; margin: 15px 0 0; padding: 0 8px 0 7px; background: #ececed; font-size: 18px; font-weight: 400; }
.section--short { height: 32px; margin-top: 0; }
.spin { display: flex; flex: 1; border: 2px solid #e2e3e5; background: #fff; }
.spin input { flex: 1; width: 0; padding-left: 4px; }
.spin__btns { display: flex; flex-direction: column; justify-content: space-around; align-items: center; width: 20px; background: #d8dade; }
.spin__btns svg { width: 18px; height: 13px; }
.row__mid { flex: 0 0 36px; display: flex; align-items: center; justify-content: center; color: #333; }
.row__mid svg { width: 18px; height: 18px; }
.captions { display: flex; gap: 36px; height: 44px; padding: 0 2px 0 115px; line-height: 36px; text-align: center; }
.captions span { flex: 1; }
.dict { padding-right: 0; }
.more { width: 30px; margin-left: 2px; background: #c6c8cb; color: #555; }
select {
  appearance: none;
  background: #fff
    url("data:image/svg+xml,%3Csvg xmlns='http://www.w3.org/2000/svg' viewBox='0 0 28 28'%3E%3Cpath fill='%23d8dade' d='M0-9h28v50H0z'/%3E%3Cpath d='m8 11 6 6 6-6' fill='none' stroke='%23555' stroke-width='2'/%3E%3C/svg%3E")
    100% 50% / 28px 28px no-repeat;
}
.seg { display: flex; flex: 1; border: 1px solid #dcdde0; background: #fff; }
.seg button { flex: 1 1 0; }
.seg .seg__on { background: #3f9af8; color: #fff; }

/* dictionary dialog */
.dialog {
  position: absolute;
  left: 199px;
  top: 335px;
  display: flex;
  flex-direction: column;
  width: 982px;
  height: 895px;
  border: 1px solid #8f8f91;
  border-radius: 12px;
  background: #f4f4f6;
  box-shadow: 0 24px 60px rgba(0, 0, 0, 0.4), 0 0 6px rgba(0, 0, 0, 0.2);
  overflow: hidden;
}
.dialog__title { display: flex; justify-content: space-between; align-items: center; height: 37px; padding: 0 16px 2px 5px; background: linear-gradient(90deg, #fbf3df, #f4f4ee 45%, #eef2f8 75%, #eff2fc); }
.dialog__title svg { width: 16px; height: 16px; }
.dialog__body { flex: 1; padding: 3px 4px 0 5px; }
.drow { display: flex; align-items: center; height: 30px; margin-top: 15px; }
.drow > label, .drow__label { flex: 0 0 109px; }
.drow--type { margin-top: 0; }
.drow--type > label { flex-basis: 103px; }
.drow select { flex: 1; height: 30px; padding-left: 7px; border: 2px solid #e2e3e5; }
.drow .flush { padding-left: 0; }
.drow .with-db {
  padding-left: 28px;
  background-image:
    url("data:image/svg+xml,%3Csvg xmlns='http://www.w3.org/2000/svg' viewBox='0 0 28 28'%3E%3Cpath fill='%23d8dade' d='M0-9h28v50H0z'/%3E%3Cpath d='m8 11 6 6 6-6' fill='none' stroke='%23555' stroke-width='2'/%3E%3C/svg%3E"),
    url("data:image/svg+xml,%3Csvg xmlns='http://www.w3.org/2000/svg' viewBox='0 0 18 21'%3E%3Cg fill='%233f9af8'%3E%3Cellipse cx='9' cy='3.500' rx='9' ry='3.500'/%3E%3Cpath d='M0 5c2 4 16 4 18 0v5c-2 5-16 5-18 0zM0 12c2 4 16 4 18 0v5c-2 5-16 5-18 0z'/%3E%3C/g%3E%3C/svg%3E");
  background-position: 100% 50%, 2px 50%;
  background-size: 28px 28px, 18px 21px;
}
.dview { display: flex; align-items: center; justify-content: center; width: 35px; height: 30px; margin-left: 7px; border: 1px solid #d8dade; background: #fff; }
.drow--seg { height: 33px; margin-top: 9px; }
.drow--seg .seg { height: 33px; }
.drow--tight { margin-top: 6px; }
.dialog__foot { display: flex; justify-content: flex-end; gap: 15px; padding: 0 20px 4px 0; }
.dialog__foot button { width: 66px; height: 30px; border: 2px solid #e0e1e3; background: #fff; }

/* floating items */
.props-scroll { position: absolute; right: 0; top: 518px; width: 13px; height: 720px; border-radius: 6px 0 0 6px; background: #e8e8ea; }
.cloud { position: absolute; right: 0; top: 164px; width: 48px; height: 56px; padding: 0 0 0 11px; border-radius: 12px 0 0 12px; background: linear-gradient(#0a93fb, #37aefc); }
.cloud svg { width: 32px; height: 34px; }

/* annotations */
.mark { position: absolute; border: 6px solid #ff5364; border-radius: 6px; }
.mark--dialog { left: 278px; top: 409px; width: 937px; height: 227px; }
.mark--return { right: -2px; top: 1168px; width: 380px; height: 100px; }
.note { position: absolute; padding: 9px 11px; border: 2px solid #ff5364; border-radius: 2px; color: #ff5364; font-size: 30px; line-height: 39px; }
.note--one { left: 1229px; top: 279px; width: 418px; height: 61px; }
.note--two { left: 1329px; top: 1004px; width: 448px; height: 101px; }
.badge { position: absolute; width: 48px; height: 48px; border-radius: 50%; background: #ff5364; color: #fff; font: 28px/48px "Liberation Serif", serif; text-align: center; }
.badge::before { content: ""; position: absolute; left: 23px; bottom: 46px; width: 2px; height: 38px; background: #ff5364; }
.badge--one { left: 1218px; top: 377px; }
.badge--two { left: 1735px; top: 1131px; }
.badge--two::before { height: 27px; }
.pointer { position: absolute; left: 1248px; top: 433px; width: 600px; height: 546px; }
```
